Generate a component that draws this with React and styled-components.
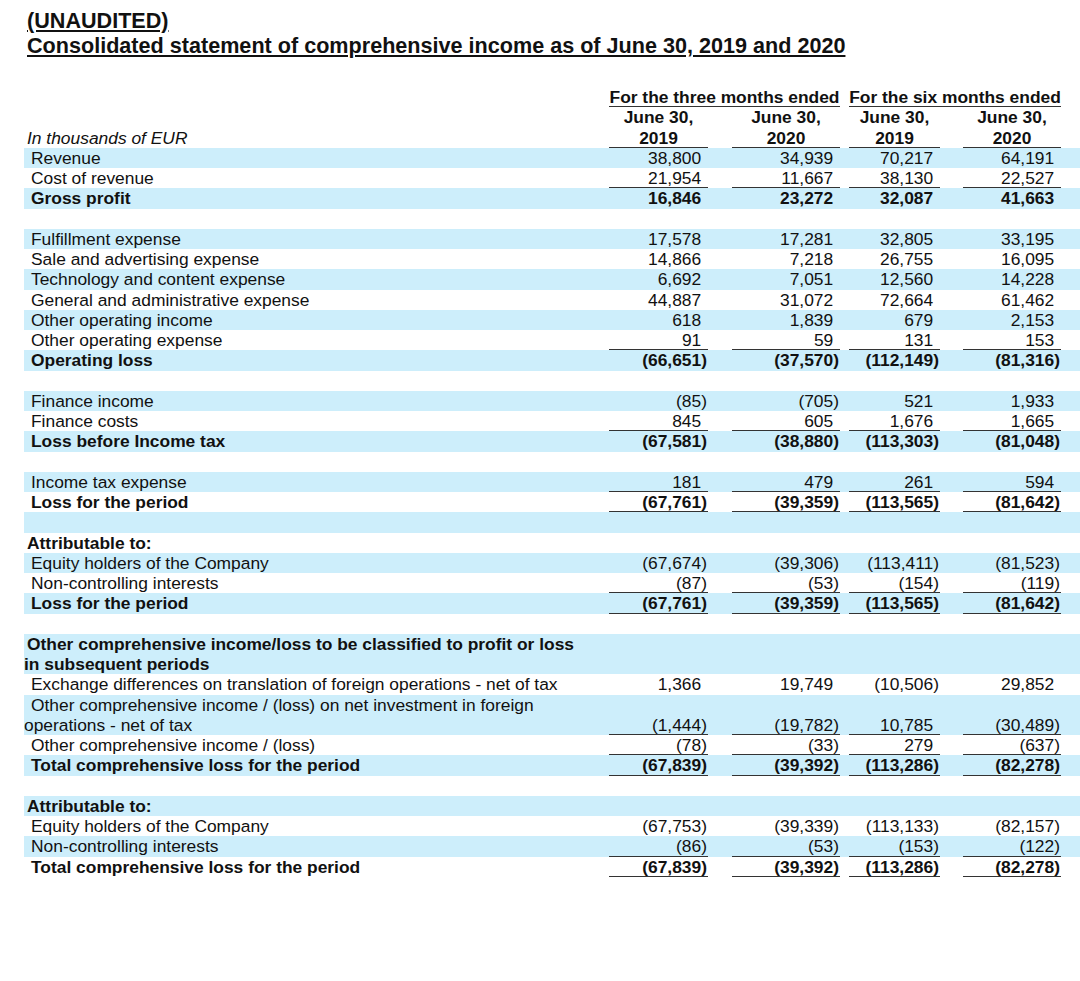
import styled, { createGlobalStyle } from 'styled-components'

const GlobalStyle = createGlobalStyle`
  body {
    margin: 0;
    background: #fff;
    font-family: 'Liberation Sans', Arial, sans-serif;
    color: #111;
  }
`

const rows = [
  { label: 'Revenue', v: ['38,800', '34,939', '70,217', '64,191'] },
  { label: 'Cost of revenue', v: ['21,954', '11,667', '38,130', '22,527'], rule: true },
  { label: 'Gross profit', v: ['16,846', '23,272', '32,087', '41,663'], bold: true },
  {},
  { label: 'Fulfillment expense', v: ['17,578', '17,281', '32,805', '33,195'] },
  { label: 'Sale and advertising expense', v: ['14,866', '7,218', '26,755', '16,095'] },
  { label: 'Technology and content expense', v: ['6,692', '7,051', '12,560', '14,228'] },
  { label: 'General and administrative expense', v: ['44,887', '31,072', '72,664', '61,462'] },
  { label: 'Other operating income', v: ['618', '1,839', '679', '2,153'] },
  { label: 'Other operating expense', v: ['91', '59', '131', '153'], rule: true },
  { label: 'Operating loss', v: ['(66,651)', '(37,570)', '(112,149)', '(81,316)'], bold: true },
  {},
  { label: 'Finance income', v: ['(85)', '(705)', '521', '1,933'] },
  { label: 'Finance costs', v: ['845', '605', '1,676', '1,665'], rule: true },
  { label: 'Loss before Income tax', v: ['(67,581)', '(38,880)', '(113,303)', '(81,048)'], bold: true },
  {},
  { label: 'Income tax expense', v: ['181', '479', '261', '594'], rule: true },
  { label: 'Loss for the period', v: ['(67,761)', '(39,359)', '(113,565)', '(81,642)'], bold: true, rule: true },
  {},
  { label: 'Attributable to:', bold: true, flush: true },
  { label: 'Equity holders of the Company', v: ['(67,674)', '(39,306)', '(113,411)', '(81,523)'] },
  { label: 'Non-controlling interests', v: ['(87)', '(53)', '(154)', '(119)'], rule: true },
  { label: 'Loss for the period', v: ['(67,761)', '(39,359)', '(113,565)', '(81,642)'], bold: true, rule: true },
  {},
  {
    label: ['Other comprehensive income/loss to be classified to profit or loss', 'in subsequent periods'],
    bold: true,
    flush: true,
  },
  { label: 'Exchange differences on translation of foreign operations - net of tax', v: ['1,366', '19,749', '(10,506)', '29,852'] },
  {
    label: ['Other comprehensive income / (loss) on net investment in foreign', 'operations - net of tax'],
    v: ['(1,444)', '(19,782)', '10,785', '(30,489)'],
    rule: true,
  },
  { label: 'Other comprehensive income / (loss)', v: ['(78)', '(33)', '279', '(637)'], rule: true },
  { label: 'Total comprehensive loss for the period', v: ['(67,839)', '(39,392)', '(113,286)', '(82,278)'], bold: true, rule: true },
  {},
  { label: 'Attributable to:', bold: true, flush: true },
  { label: 'Equity holders of the Company', v: ['(67,753)', '(39,339)', '(113,133)', '(82,157)'] },
  { label: 'Non-controlling interests', v: ['(86)', '(53)', '(153)', '(122)'], rule: true },
  { label: 'Total comprehensive loss for the period', v: ['(67,839)', '(39,392)', '(113,286)', '(82,278)'], bold: true, rule: true },
]

const numCols = [2, 4, 6, 8]

const App = () => {
  return (
    <Page>
      <GlobalStyle />
      <TitleBlock>
        <Title>(UNAUDITED)</Title>
        <Title>Consolidated statement of comprehensive income as of June 30, 2019 and 2020</Title>
      </TitleBlock>

      <Header>
        <Row>
          <GroupHead $col="2 / 5">For the three months ended</GroupHead>
          <GroupHead $col="6 / 9">For the six months ended</GroupHead>
        </Row>
        <Row>
          {numCols.map((c) => (
            <HeadCell key={c} $col={c}>June 30,</HeadCell>
          ))}
        </Row>
        <Row>
          <Unit>In thousands of EUR</Unit>
          {['2019', '2020', '2019', '2020'].map((y, i) => (
            <HeadCell key={i} $col={numCols[i]} $rule>
              {y}
            </HeadCell>
          ))}
        </Row>
      </Header>

      <Body>
        {rows.map((r, i) => (
          <Row key={i}>
            <Label $bold={r.bold} $flush={r.flush}>
              {Array.isArray(r.label) ? (
                <>
                  {r.label[0]}
                  <br />
                  {r.label[1]}
                </>
              ) : (
                r.label
              )}
            </Label>
            {r.v &&
              r.v.map((val, j) => (
                <Num key={j} $col={numCols[j]} $bold={r.bold} $rule={r.rule}>
                  <Figure $pos={!val.endsWith(')')}>{val}</Figure>
                </Num>
              ))}
          </Row>
        ))}
      </Body>
    </Page>
  )
}

export default App

const Page = styled.div`
  padding: 8px 0 40px 24px;
`

const TitleBlock = styled.div`
  padding-left: 3px;
  margin-bottom: 29px;
`

const Title = styled.div`
  font-size: 21.6px;
  line-height: 25px;
  font-weight: 700;
  text-decoration: underline;
  text-decoration-thickness: 2px;
  text-underline-offset: 2px;
  white-space: nowrap;
`

const Row = styled.div`
  display: grid;
  grid-template-columns: 585px 99px 24px 108px 9px 91px 23px 98px 1fr;
  font-size: 17.4px;
  line-height: 20.25px;
  min-height: 20.25px;
`

const Header = styled.div``

const Body = styled.div`
  & > ${Row}:nth-child(odd) {
    background: #cdeefb;
  }
`

const GroupHead = styled.div`
  grid-column: ${(p) => p.$col};
  grid-row: 1;
  font-weight: 700;
  text-align: center;
  white-space: nowrap;
  box-shadow: inset 0 -1px 0 #333;
`

const HeadCell = styled.div`
  grid-column: ${(p) => p.$col};
  grid-row: 1;
  font-weight: 700;
  text-align: center;
  box-shadow: ${(p) => (p.$rule ? 'inset 0 -1px 0 #333' : 'none')};
`

const Unit = styled.div`
  grid-column: 1;
  grid-row: 1;
  font-style: italic;
  padding-left: 3px;
`

const Label = styled.div`
  grid-column: 1;
  grid-row: 1;
  font-weight: ${(p) => (p.$bold ? 700 : 400)};
  text-indent: ${(p) => (p.$flush ? '3px' : '7px')};
  white-space: nowrap;
`

const Num = styled.div`
  grid-column: ${(p) => p.$col};
  grid-row: 1;
  align-self: end;
  text-align: right;
  padding-right: 1px;
  font-weight: ${(p) => (p.$bold ? 700 : 400)};
  box-shadow: ${(p) => (p.$rule ? 'inset 0 -1px 0 #333' : 'none')};
`

const Figure = styled.span`
  padding-right: ${(p) => (p.$pos ? '0.333em' : '0')};
`
